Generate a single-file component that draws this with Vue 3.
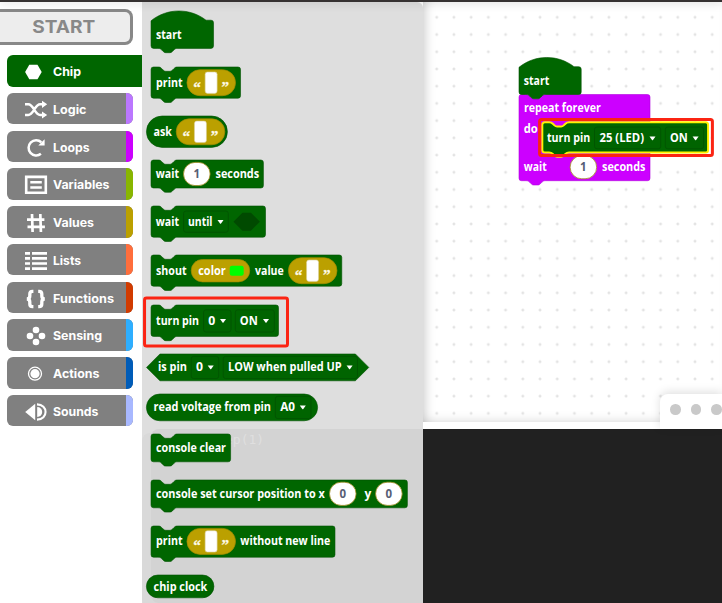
<script setup>
import { h } from 'vue'

const GREEN = '#006600'
const PURPLE = '#cc00ff'

const categories = [
  { name: 'Chip', color: '#006600', icon: 'chip', w: 28, active: true },
  { name: 'Logic', color: '#bb77ff', icon: 'logic', w: 33.5 },
  { name: 'Loops', color: '#cc00ff', icon: 'loops', w: 36.5 },
  { name: 'Variables', color: '#88b600', icon: 'variables', w: 56.5 },
  { name: 'Values', color: '#bba000', icon: 'values', w: 41 },
  { name: 'Lists', color: '#ff6e3c', icon: 'lists', w: 28 },
  { name: 'Functions', color: '#d13b00', icon: 'functions', w: 61 },
  { name: 'Sensing', color: '#2eaeff', icon: 'sensing', w: 49 },
  { name: 'Actions', color: '#005cb8', icon: 'actions', w: 46.5 },
  { name: 'Sounds', color: '#a8b8ff', icon: 'sounds', w: 45.5 },
]

const notch = 'c2.2 0 2.8 .5 3.7 1.4l1.7 1.7c.9 .9 1.5 1.2 2.6 1.2h4c1.1 0 1.7-.3 2.6-1.2l1.7-1.7c.9-.9 1.5-1.4 3.7-1.4'
const bump = 'c-2.2 0-2.8 .5-3.7 1.4l-1.7 1.7c-.9 .9-1.5 1.2-2.6 1.2h-4c-1.1 0-1.7-.3-2.6-1.2l-1.7-1.7c-.9-.9-1.5-1.4-3.7-1.4'

function outline(b) {
  const r = b.x + b.w
  const bot = b.y + b.h
  if (b.shape === 'pill') {
    const q = b.h / 2
    return `M${b.x + q} ${b.y}H${r - q}a${q} ${q} 0 0 1 0 ${b.h}H${b.x + q}a${q} ${q} 0 0 1 0 ${-b.h}Z`
  }
  if (b.shape === 'hex') {
    const q = b.h / 2
    return `M${b.x + q} ${b.y}H${r - q}L${r} ${b.y + q}L${r - q} ${bot}H${b.x + q}L${b.x} ${b.y + q}Z`
  }
  const base = `V${bot - 2.5}q0 2.5 -2.5 2.5H${b.x + 26.8}${bump}H${b.x + 2.5}q-2.5 0 -2.5 -2.5Z`
  if (b.shape === 'hat') {
    return `M${b.x} ${b.y + 9.8}c16 -13 39 -13 55 -.6H${r - 2.5}q2.5 0 2.5 2.5${base}`
  }
  return `M${b.x} ${b.y + 2.5}q0 -2.5 2.5 -2.5H${b.x + 6.8}${notch}H${r - 2.5}q2.5 0 2.5 2.5${base}`
}

const label = (s, x, y, w, cls = 'label') =>
  h('text', { class: cls, x, y, textLength: w, lengthAdjust: 'spacingAndGlyphs' }, s)

function drawPart(p) {
  const [kind, ...a] = p
  if (kind === 't') return [label(...a)]
  if (kind === 'dd') {
    const [x, y, w, hh, s, tx, base, tw, cx] = a
    return [
      h('rect', { class: 'dropdown', x, y, width: w, height: hh, rx: 2.5 }),
      label(s, tx, base, tw),
      h('path', { class: 'caret', d: `M${cx} ${base - 5.7}h6l-2.5 3.4q-.5 .6 -1 0Z` }),
    ]
  }
  if (kind === 'str') {
    const [x, cy] = a
    return [
      h('rect', { class: 'olive', x: x + 0.4, y: cy - 13, width: 48.6, height: 26, rx: 13 }),
      label('“', x + 6.7, cy + 9, 7.6, 'quote'),
      label('”', x + 34.9, cy + 9, 7.6, 'quote'),
      h('rect', { class: 'field', x: x + 18.6, y: cy - 10.7, width: 12, height: 21.4, rx: 2.3 }),
    ]
  }
  if (kind === 'num') {
    const [x, cy, s] = a
    return [
      h('rect', { class: 'number', x: x + 0.3, y: cy - 11.6, width: 26.6, height: 23.2, rx: 11.6 }),
      h('text', { class: 'digit', x: x + 13.5, y: cy + 4 }, s),
    ]
  }
  if (kind === 'color') {
    const [x, cy] = a
    return [
      h('rect', { class: 'olive', x, y: cy - 11.2, width: 58.5, height: 22.4, rx: 11.2 }),
      label('color', x + 7, cy + 4, 27.5),
      h('rect', { fill: '#00ff00', x: x + 38.5, y: cy - 5, width: 14, height: 10, rx: 2.3 }),
    ]
  }
  if (kind === 'slot') {
    const [x, y] = a
    return [h('path', { fill: '#004a00', d: `M${x} ${y + 9}l9 -9h8.5l9 9l-9 9h-8.5Z` })]
  }
  return []
}

const Block = (props) => {
  const b = props.block
  return h('g', [
    h('path', { class: 'body', d: outline(b), fill: b.fill || GREEN, stroke: b.stroke || '#005200', 'stroke-width': b.strokeWidth || 0.6 }),
    ...b.parts.flatMap(drawPart),
  ])
}
Block.props = ['block']

const palette = [
  { shape: 'hat', x: 151, y: 11.3, w: 62.5, h: 37.4, parts: [['t', 'start', 156, 39, 25.5]] },
  { x: 151, y: 66.6, w: 89.5, h: 31.2, parts: [['t', 'print', 156, 86.3, 26.5], ['str', 186.5, 82.3]] },
  { shape: 'pill', x: 146.4, y: 115.6, w: 81, h: 31.4, parts: [['t', 'ask', 153.4, 135.3, 18.5], ['str', 175.8, 131.4]] },
  { x: 151, y: 160.4, w: 112.4, h: 28, parts: [['t', 'wait', 155.8, 178, 23.2], ['num', 183.2, 174.4, '1'], ['t', 'seconds', 215.5, 178, 43.7]] },
  { x: 151, y: 206.3, w: 114.5, h: 31.2, parts: [['t', 'wait', 155.8, 226, 23.2], ['dd', 183.5, 211.3, 44.8, 21.3, 'until', 188, 226, 24.5, 217.5], ['slot', 233.4, 213]] },
  { x: 151, y: 255.5, w: 190.8, h: 31.2, parts: [['t', 'shout', 156, 275.2, 30.5], ['color', 191.2, 271.2], ['t', 'value', 255, 275.2, 28.8], ['str', 288, 271.2]] },
  { x: 151, y: 304.6, w: 127.5, h: 31.4, parts: [['t', 'turn pin', 156, 324.3, 43], ['dd', 203.5, 309.4, 27.5, 22.3, '0', 208.3, 324.3, 7, 220], ['dd', 235.3, 309.4, 39, 22.3, 'ON', 239.8, 324.3, 18, 263]] },
  { shape: 'hex', x: 146.5, y: 354, w: 222.3, h: 26.8, parts: [['t', 'is pin', 158, 371.2, 29], ['dd', 191.2, 356.3, 27.5, 22.3, '0', 196, 371.2, 7, 207.7], ['dd', 223.2, 356.3, 134.3, 22.3, 'LOW when pulled UP', 228, 371.2, 113.7, 346.6]] },
  { shape: 'pill', x: 146.4, y: 394.1, w: 171.2, h: 26.8, parts: [['t', 'read voltage from pin', 153.6, 411.3, 117.4], ['dd', 275.3, 396.4, 35.7, 22.3, 'A0', 280.2, 411.3, 14.8, 299.8]] },
  { x: 151, y: 434.3, w: 79.6, h: 27.8, parts: [['t', 'console clear', 156, 452.1, 70]] },
  { x: 151, y: 480.2, w: 256.4, h: 27.8, parts: [['t', 'console set cursor position to x', 156, 498.1, 168.8], ['num', 329.2, 494, '0'], ['t', 'y', 364.4, 498.1, 6.8], ['num', 375.3, 494, '0']] },
  { x: 151, y: 526, w: 184, h: 31.2, parts: [['t', 'print', 156, 545.3, 26.5], ['str', 186.5, 541.4], ['t', 'without new line', 240.3, 545.3, 90]] },
  { shape: 'pill', x: 146.4, y: 575.2, w: 67.5, h: 22.8, parts: [['t', 'chip clock', 153.6, 590.8, 53.7]] },
].map((b, i, all) => ({ ...b, gap: b.y - (i ? all[i - 1].y + all[i - 1].h : 2) }))

const program = [
  { x: 519, y: 94.5, w: 131, h: 86.2, fill: PURPLE, stroke: '#b000dd', parts: [['t', 'repeat forever', 524, 112.3, 76.8], ['t', 'do', 523.8, 133, 14], ['t', 'wait', 523.8, 171.2, 23], ['num', 569.8, 167.2, '1'], ['t', 'seconds', 602, 171.2, 43.5]] },
  { shape: 'hat', x: 519, y: 57.5, w: 62.2, h: 37, parts: [['t', 'start', 523.8, 85.3, 25.5]] },
  { x: 542.3, y: 122.3, w: 165.8, h: 30.2, stroke: '#fff200', strokeWidth: 2, parts: [['t', 'turn pin', 547, 142.2, 43.2], ['dd', 594.5, 127, 66.2, 21.8, '25 (LED)', 599.5, 142.2, 44.5, 649.5], ['dd', 665.3, 127, 38.3, 21.8, 'ON', 670, 142.2, 17.8, 692.6]] },
]
</script>

<template>
  <div class="app">
    <header class="top-edge"></header>
    <div class="main">
      <nav class="sidebar">
        <div class="start-btn">
          <svg width="130" height="30" viewBox="0 0 130 30">
            <text class="start-text" x="32.3" y="21" textLength="63" lengthAdjust="spacingAndGlyphs">START</text>
          </svg>
        </div>
        <ul class="categories">
          <li v-for="c in categories" :key="c.name" class="category" :class="{ active: c.active }">
            <svg class="cat-content" width="119" height="32" viewBox="7 0 119 32">
              <path v-if="c.icon === 'chip'" d="M29.3 9.8h8.2l4.2 7.2-4.2 7.2h-8.2L25.1 17Z" fill="#fff" />
              <g v-else-if="c.icon === 'logic'" class="line">
                <path d="M25 11.3h3.2c5.6 0 6.4 10.7 12 10.7h3.3M25 22h3.2c5.6 0 6.4-10.7 12-10.7h3.3" stroke-width="2.4" />
                <path class="solid" d="M42 7.7l5.2 3.6-5.2 3.6ZM42 18.4l5.2 3.6-5.2 3.6Z" />
              </g>
              <g v-else-if="c.icon === 'loops'" class="line">
                <path d="M41.3 11.2a7.6 7.6 0 1 0 -.4 11.6" stroke-width="2.5" />
                <path class="solid" d="M44.6 8.2v6.2h-6.3Z" />
              </g>
              <g v-else-if="c.icon === 'variables'" class="line">
                <path d="M26.2 8.9h19.6v15.8H26.2Z" stroke-width="2.6" />
                <path d="M30.3 14.2h11.5M30.3 19.4h11.5" stroke-width="2.5" />
              </g>
              <g v-else-if="c.icon === 'values'" class="line">
                <path d="M32 8l.6 18M40.3 8l.6 18M27 13.6h17.4M27.5 20.8h17.4" stroke-width="2.7" />
              </g>
              <g v-else-if="c.icon === 'lists'" class="line">
                <path d="M25 9.3h5M32 9.3h15M25 14.4h5M32 14.4h15M25 19.5h5M32 19.5h15M25 24.7h5M32 24.7h15" stroke-width="2.7" />
              </g>
              <g v-else-if="c.icon === 'functions'" class="line">
                <path d="M33.4 9.4h-.9c-2 0-2.7 1-2.7 2.7v2c0 1.9-.8 2.9-3 2.9c2.2 0 3 1 3 2.9v2c0 1.7 .7 2.7 2.7 2.7h.9M38.2 9.4h.9c2 0 2.7 1 2.7 2.7v2c0 1.9 .8 2.9 3 2.9c-2.2 0-3 1-3 2.9v2c0 1.7-.7 2.7-2.7 2.7h-.9" stroke-width="3.3" />
              </g>
              <g v-else-if="c.icon === 'sensing'" fill="#fff">
                <circle cx="36" cy="11" r="3.3" /><circle cx="30" cy="17" r="3.3" />
                <circle cx="42" cy="17" r="3.3" /><circle cx="36" cy="23" r="3.3" />
              </g>
              <g v-else-if="c.icon === 'actions'">
                <circle cx="35" cy="16.7" r="6.5" fill="none" stroke="#fff" stroke-width="1.3" />
                <circle cx="35" cy="16.7" r="4.6" fill="#fff" />
              </g>
              <g v-else>
                <path d="M25.2 17l10-8.3v16.6Z" fill="#fff" />
                <path d="M37.2 12a5 5 0 0 1 0 10Z" fill="#fff" />
                <path d="M37 9.4c11.4 0 11.4 15.2 0 15.2" fill="none" stroke="#fff" stroke-width="2.1" />
              </g>
              <text class="cat-text" x="53" y="20.8" :textLength="c.w" lengthAdjust="spacingAndGlyphs">{{ c.name }}</text>
            </svg>
            <span class="strip" :style="{ background: c.color }"></span>
          </li>
        </ul>
      </nav>

      <section class="flyout">
        <svg
          v-for="(b, i) in palette"
          :key="i"
          class="block"
          width="281"
          :height="b.h"
          :viewBox="`142 ${b.y} 281 ${b.h}`"
          :style="{ marginTop: b.gap + 'px' }"
        >
          <Block :block="b" />
          <rect v-if="i === 6" class="highlight" x="144.5" y="297.5" width="143" height="48" rx="2" />
        </svg>
        <div class="behind"><span class="code">ep(1)</span></div>
      </section>

      <section class="workspace">
        <svg class="canvas" width="299" height="420" viewBox="423 2 299 420">
          <defs>
            <pattern id="grid" x="428.1" y="8.7" width="17.22" height="17.22" patternUnits="userSpaceOnUse">
              <path d="M7.1 8.6h3M8.6 7.1v3" stroke="#dcdcdc" stroke-width="1.1" />
            </pattern>
          </defs>
          <rect x="423" y="2" width="299" height="420" fill="url(#grid)" />
          <Block v-for="(b, i) in program" :key="i" :block="b" />
          <rect class="highlight" x="539.6" y="119.4" width="172.8" height="36.2" rx="2" />
        </svg>
        <div class="divider">
          <div class="tab"><i></i><i></i><i></i></div>
        </div>
        <div class="console"></div>
      </section>
    </div>
  </div>
</template>

<style>
body { background: #fff; }
svg text { white-space: pre; }
.body { stroke-linejoin: round; }
.label { font: 700 11.8px "Open Sans", "Noto Sans", sans-serif; fill: #fff; }
.dropdown { fill: #006400; stroke: #005500; stroke-width: 1; }
.caret { fill: #fff; }
.olive { fill: #bba000; stroke: #a08a00; stroke-width: .7; }
.quote { font: 700 15.5px "Liberation Serif", serif; fill: #fffbe8; stroke: #fffbe8; stroke-width: .3; }
.field { fill: #fff; stroke: #d8cf96; stroke-width: .6; }
.number { fill: #fff; stroke: #a08a20; stroke-width: .8; }
.digit { font: 700 11.5px "Open Sans", "Noto Sans", sans-serif; fill: #575e75; text-anchor: middle; }
.highlight { fill: none; stroke: #fb2413; stroke-width: 3; }
</style>

<style scoped>
.app { width: 722px; height: 603px; overflow: hidden; display: flex; flex-direction: column; background: #fff; }
.top-edge { height: 2px; flex: none; background: #353131; box-shadow: 0 1px 9px rgba(0, 0, 0, .28); position: relative; z-index: 2; }
.main { display: flex; flex: 1; min-height: 0; }
.sidebar { width: 142px; flex: none; padding-top: 7px; box-sizing: border-box; }
.start-btn { box-sizing: border-box; width: 133px; height: 36px; border: 3px solid #888; border-left: 0; border-radius: 0 8px 8px 0; background: #ededed; }
.start-btn svg { display: block; }
.start-text { font: 700 17.3px Inter, sans-serif; fill: #888; }
.categories { list-style: none; margin: 10px 0 0; padding: 0 0 0 7px; display: flex; flex-direction: column; gap: 6.27px; }
.category { display: flex; width: 126px; height: 31.5px; border-radius: 6px; overflow: hidden; background: #808080; }
.category.active { width: 135px; border-radius: 6px 0 0 6px; background: #006600; }
.cat-content { display: block; flex: none; }
.strip { flex: 1; }
.cat-text { font: 700 12.2px Inter, sans-serif; fill: #fff; }
.line { fill: none; stroke: #fff; stroke-width: 2.1; }
.line .solid { fill: #fff; stroke: none; }
.flyout { width: 281px; flex: none; background: #dedede; border-radius: 0 6px 0 0; display: flex; flex-direction: column; position: relative; isolation: isolate; }
.block { display: block; flex: none; overflow: visible; }
.behind { position: absolute; z-index: -1; left: 9px; right: 0; top: 427px; bottom: 0; background: #d3d3d3; border-radius: 8px 0 0 8px; box-shadow: -9px 4px 0 #d9d9d9; }
.code { display: block; padding: 3px 0 0 74px; font: 13px/16px "DejaVu Sans Mono", monospace; color: #dfdfdf; }
.workspace { flex: 1; display: flex; flex-direction: column; min-width: 0; }
.canvas { display: block; flex: none; background: #fff; box-shadow: inset 9px 0 11px -7px rgba(0, 0, 0, .2), inset 0 -8px 12px -8px rgba(0, 0, 0, .15); }
.divider { height: 7px; flex: none; background: #fff; position: relative; }
.tab { position: absolute; right: 0; bottom: 0; width: 62px; height: 35px; box-sizing: border-box; padding: 10px 0 0 10px; display: flex; gap: 10px; overflow: hidden; background: #fff; border-radius: 8px 0 0 0; box-shadow: 0 -2px 10px rgba(0, 0, 0, .13); }
.tab i { width: 10.5px; height: 10.5px; flex: none; border-radius: 50%; background: #c9c9c9; }
.console { flex: 1; background: #212121; }
</style>
